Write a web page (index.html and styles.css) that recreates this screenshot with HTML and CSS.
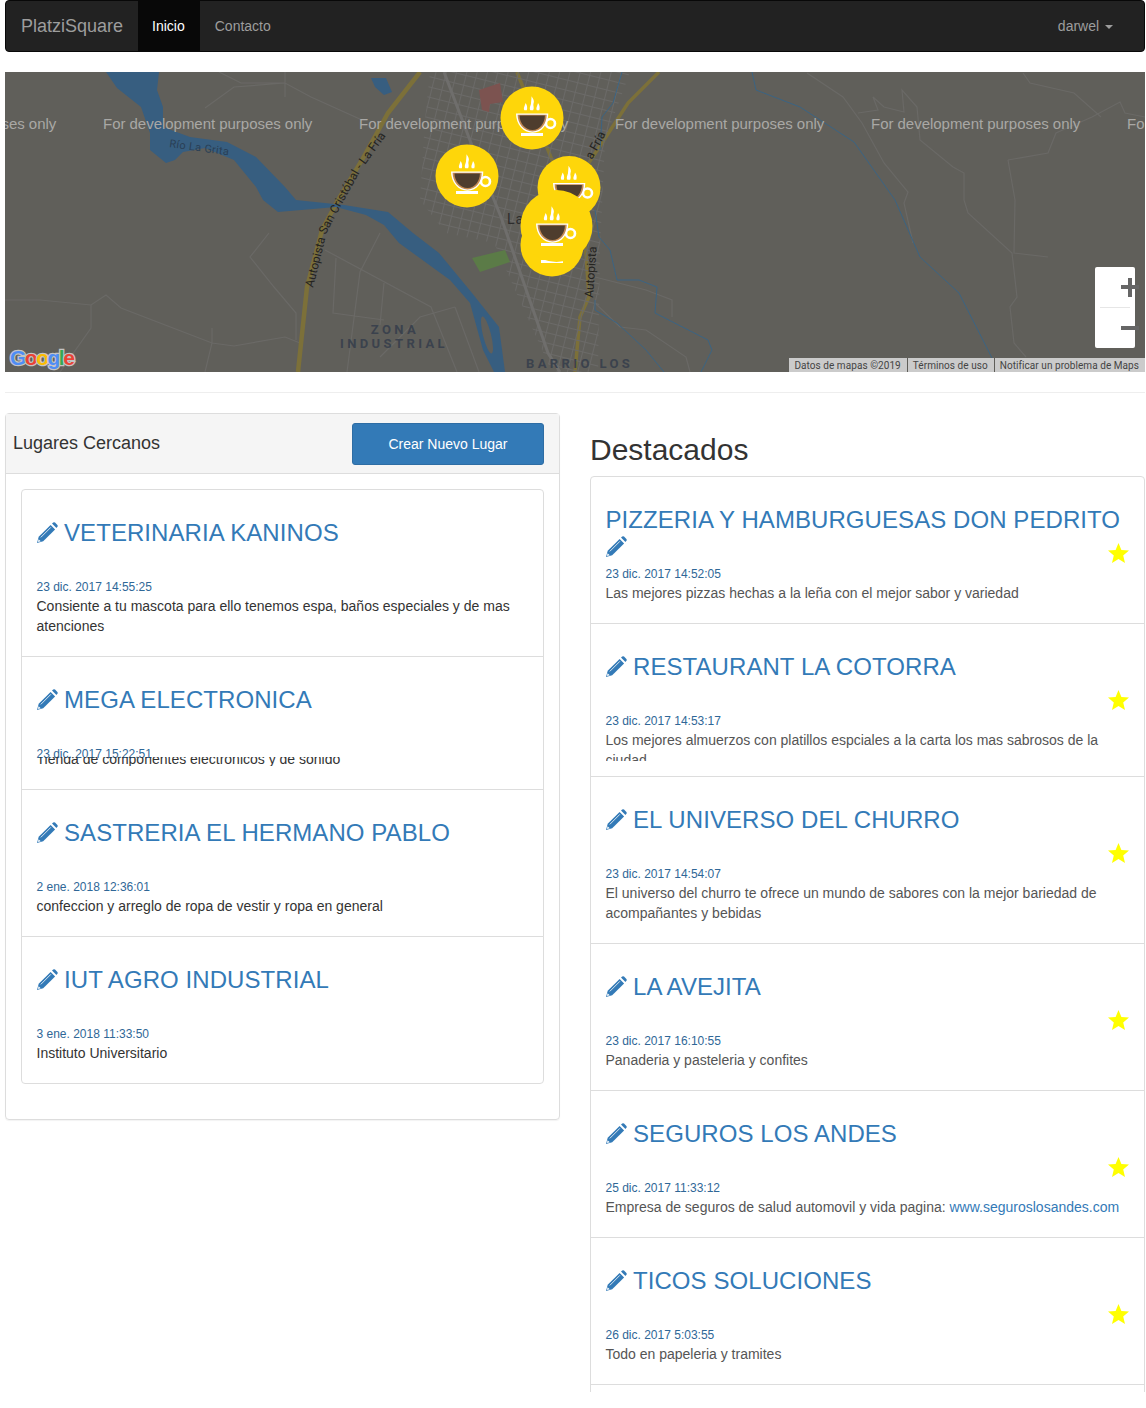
FILE: index.html
```html
<!DOCTYPE html>
<html lang="es">
<head>
<meta charset="utf-8">
<title>PlatziSquare</title>
<link rel="stylesheet" href="styles.css">
</head>
<body>
<svg class="defs" width="0" height="0" aria-hidden="true">
  <symbol id="pencil" viewBox="0 0 21 21">
    <path d="M15 1.600 16.200.6Q17.100-.1 18 .6L20.400 3Q21.100 3.900 20.400 4.800L19.400 5.900Z"/>
    <path d="M13.600 2.900 18.100 7.400 6.200 19.300 0 21 1.700 14.800Z"/>
    <path d="M3.800 15.400 13.900 5.300" stroke="#fff" stroke-width=".8"/>
    <path d="M1.500 17.200 1 20 3.800 19.300Z" fill="#fff"/>
  </symbol>
  <symbol id="star" viewBox="0 0 21 20">
    <path d="M10.500 0 13.400 6.900 21 7.500 15.200 12.500 17 20 10.500 16 4 20 5.800 12.500 0 7.500 7.600 6.900Z"/>
  </symbol>
  <symbol id="cup" viewBox="-32 -32 64 64" overflow="visible">
    <circle cx="18.500" cy="5.500" r="4.500" fill="none" stroke="#fff" stroke-width="2.600"/>
    <path d="M-16-4.500H16.300C16.300 6 10 14.700 .5 14.700-9 14.700-16 6-16-4.500Z" fill="#fff"/>
    <path d="M-14.400-3.300H14.700C14.700 5.500 9 13.400 .5 13.400-8 13.400-14.400 5.500-14.400-3.300Z" fill="#c48a52"/>
    <path d="M-12.500-2.500H12.900C12.900 4.500 8 12 .5 12-7 12-12.500 4.500-12.500-2.500Z" fill="#4e3d2e"/>
    <rect x="-11" y="15" width="22" height="3" fill="#fff"/>
    <path d="M-.5-21.700C1.500-19 2.500-17 1.500-14.500 .8-12.500 2.500-10.500 1.200-7.700H-1.600C-3-10-1.200-12.500-1-14.500-.8-17-.5-19-.5-21.700Z" fill="#fff"/>
    <path d="M-6.500-15C-5-13-4.300-10.500-5.200-7.700H-7.600C-9-10-7-12-6.500-15Z" fill="#fff"/>
    <path d="M6-15C7.500-13 8.200-10.500 7.300-7.700H4.900C3.500-10 5.500-12 6-15Z" fill="#fff"/>
  </symbol>
  <pattern id="streets" width="10" height="10" patternUnits="userSpaceOnUse" patternTransform="rotate(14)">
    <path d="M0 .5H10M.5 0V10" stroke="#6b6a68" stroke-width="1" fill="none"/>
  </pattern>
</svg>

<div class="page">
  <nav class="navbar">
    <a class="brand" href="#">PlatziSquare</a>
    <a class="nav-link active" href="#">Inicio</a>
    <a class="nav-link" href="#">Contacto</a>
    <a class="nav-link user" href="#">darwel <span class="caret"></span></a>
  </nav>

  <div class="map">
    <svg class="map-art" width="1140" height="300" viewBox="5 72 1140 300">
      <rect x="5" y="72" width="1140" height="300" fill="#605f5a"/>
      <path class="minor" d="M5 300 40 300 91 305 106 295 121 308 212 343 234 346 285 337 300 343M91 305V328L60 372M212 328V343L205 372M269 233 250 257 274 287 296 313V340M205 108 234 87 285 83 311 97 362 120M219 72 241 83 285 83M285 72V97"/>
      <path class="minor" d="M325 250 431 307 457 372M455 307 420 317 380 357M336 258 333 313 384 320M384 283 380 325M380 233 360 272 347 372M455 307 479 372"/>
      <path class="minor" d="M807 73 843 97 862 123 884 163 908 192 904 203 913 243M858 113 878 110 873 97 884 107 904 112 902 90 917 107 920 140 953 167 964 173V200L968 213 1012 253 1017 297 1010 307 1014 343 1026 357M1008 160 1048 153 1056 133 1092 117 1120 102 1125 113 1145 117M1008 160 1015 200 1014 253 1048 257M1023 73 1030 83 1074 93 1101 117M595 277 646 290 672 300V317M595 303 620 327 646 330 686 357 690 372"/>
      <path d="M420 72 388 113 362 160 338 200 322 230 307 287 298 372" fill="none" stroke="#7c7039" stroke-width="4.500"/>
      <path d="M517 72 552 160 585 240 589 297 580 317 575 372" fill="none" stroke="#7c7039" stroke-width="3.500"/>
      <path d="M659 72 628 103 602 143 584 170" fill="none" stroke="#7c7039" stroke-width="3.500"/>
      <polygon points="430,72 630,72 605,140 600,250 598,372 552,372 512,283 494,243 446,233 420,200 425,120" fill="url(#streets)"/>
      <path d="M444 72 471 143 501 217 548 353 560 372" fill="none" stroke="#6f6e6c" stroke-width="3"/>
      <polygon points="479,90 500,83 503,102 490,104 489,112 482,110" fill="#7c5350"/>
      <polygon points="472,258 505,250 510,262 480,272" fill="#5b7b47"/>
      <path class="water" d="M106 72 117 88 141 107 150 133 150 150 166 163 175 160 183 152 205 148 234 160 256 187 263 200 278 212 336 207 366 215 384 225 399 243 450 280 470 303 483 350 494 372H505L499 327 472 293 439 253 413 233 388 212 344 205 296 200 285 187 256 157 227 142 190 137 163 127 163 107 157 90 159 72Z"/>
      <path class="water" d="M371 78 386 78 392 92 384 95 375 87Z"/>
      <ellipse cx="487" cy="335" rx="4" ry="19" transform="rotate(-14 487 335)" fill="#605f5a"/>
      <path class="river-thin" d="M752 72 756 90 800 107 854 142 895 200 920 257 959 293 992 358M622 72 613 103 602 117 600 150M595 210 599 237 610 250 617 280 639 280 657 287 655 313 708 340 712 350 701 372M595 300V310L617 323 646 350 664 372"/>
      <path id="hw1" class="none" d="M313 288 327 232 342 204 360 172 390 130"/>
      <text class="road"><textPath href="#hw1">Autopista San Cristóbal - La Fría</textPath></text>
      <text class="road" transform="translate(593 298) rotate(-86)">Autopista</text>
      <text class="road" transform="translate(592 160) rotate(-62)">a Fría</text>
      <text class="river-name" transform="translate(169 147) rotate(8)">Río La Grita</text>
      <text class="place" x="507" y="224">La</text>
      <text class="area" x="395" y="334" text-anchor="middle">ZONA</text>
      <text class="area" x="394" y="348" text-anchor="middle">INDUSTRIAL</text>
      <text class="area" x="526" y="368">BARRIO LOS</text>
      <text class="dev" x="-153" y="129">For development purposes only</text>
      <text class="dev" x="103" y="129">For development purposes only</text>
      <text class="dev" x="359" y="129">For development purposes only</text>
      <text class="dev" x="615" y="129">For development purposes only</text>
      <text class="dev" x="871" y="129">For development purposes only</text>
      <text class="dev" x="1127" y="129">For development purposes only</text>
      <circle class="pin" cx="532" cy="118" r="31.500"/><use href="#cup" x="500" y="86" width="64" height="64"/>
      <circle class="pin" cx="467" cy="176" r="31.500"/><use href="#cup" x="435" y="144" width="64" height="64"/>
      <circle class="pin" cx="569" cy="187.500" r="31.500"/><use href="#cup" x="537" y="155.500" width="64" height="64"/>
      <circle class="pin" cx="552" cy="245" r="31.500"/><use href="#cup" x="520" y="213" width="64" height="64"/>
      <circle class="pin" cx="556.500" cy="226" r="36"/><use href="#cup" x="520" y="196" width="64" height="64"/>
      <text class="logo" x="10" y="365"><tspan fill="#4f8df5">G</tspan><tspan fill="#ea4335">o</tspan><tspan fill="#fbbc05">o</tspan><tspan fill="#4f8df5">g</tspan><tspan fill="#34a853">l</tspan><tspan fill="#ea4335">e</tspan></text>
    </svg>
    <div class="zoom-box">
      <span class="plus-h"></span><span class="plus-v"></span>
      <span class="zoom-line"></span>
      <span class="minus"></span>
    </div>
    <div class="attrib">
      <span>Datos de mapas ©2019</span>
      <span>Términos de uso</span>
      <span>Notificar un problema de Maps</span>
    </div>
  </div>

  <hr class="rule">

  <div class="columns">
    <section class="panel">
      <header class="panel-head">
        <h3 class="panel-title">Lugares Cercanos</h3>
        <a class="btn" href="#">Crear Nuevo Lugar</a>
      </header>
      <div class="panel-body">
        <ul class="list">
          <li class="item">
            <h3 class="title"><svg class="pen"><use href="#pencil"/></svg>VETERINARIA KANINOS</h3>
            <div class="date">23 dic. 2017 14:55:25</div>
            <p class="desc dark">Consiente a tu mascota para ello tenemos espa, baños especiales y de mas atenciones</p>
          </li>
          <li class="item clip-left">
            <h3 class="title"><svg class="pen"><use href="#pencil"/></svg>MEGA ELECTRONICA</h3>
            <div class="date">23 dic. 2017 15:22:51</div>
            <div class="desc-clip"><p class="desc dark">Tienda de componentes electronicos y de sonido</p></div>
          </li>
          <li class="item">
            <h3 class="title"><svg class="pen"><use href="#pencil"/></svg>SASTRERIA EL HERMANO PABLO</h3>
            <div class="date">2 ene. 2018 12:36:01</div>
            <p class="desc dark">confeccion y arreglo de ropa de vestir y ropa en general</p>
          </li>
          <li class="item">
            <h3 class="title"><svg class="pen"><use href="#pencil"/></svg>IUT AGRO INDUSTRIAL</h3>
            <div class="date">3 ene. 2018 11:33:50</div>
            <p class="desc dark">Instituto Universitario</p>
          </li>
        </ul>
      </div>
    </section>

    <section class="featured">
      <h2 class="featured-title">Destacados</h2>
      <ul class="list">
        <li class="item">
          <h3 class="title">PIZZERIA Y HAMBURGUESAS DON PEDRITO <svg class="pen"><use href="#pencil"/></svg></h3>
          <svg class="star"><use href="#star"/></svg>
          <div class="date">23 dic. 2017 14:52:05</div>
          <p class="desc">Las mejores pizzas hechas a la leña con el mejor sabor y variedad</p>
        </li>
        <li class="item clip-right">
          <h3 class="title"><svg class="pen"><use href="#pencil"/></svg>RESTAURANT LA COTORRA</h3>
          <svg class="star"><use href="#star"/></svg>
          <div class="date">23 dic. 2017 14:53:17</div>
          <p class="desc">Los mejores almuerzos con platillos espciales a la carta los mas sabrosos de la ciudad</p>
        </li>
        <li class="item">
          <h3 class="title"><svg class="pen"><use href="#pencil"/></svg>EL UNIVERSO DEL CHURRO</h3>
          <svg class="star"><use href="#star"/></svg>
          <div class="date">23 dic. 2017 14:54:07</div>
          <p class="desc">El universo del churro te ofrece un mundo de sabores con la mejor bariedad de acompañantes y bebidas</p>
        </li>
        <li class="item">
          <h3 class="title"><svg class="pen"><use href="#pencil"/></svg>LA AVEJITA</h3>
          <svg class="star"><use href="#star"/></svg>
          <div class="date">23 dic. 2017 16:10:55</div>
          <p class="desc">Panaderia y pasteleria y confites</p>
        </li>
        <li class="item">
          <h3 class="title"><svg class="pen"><use href="#pencil"/></svg>SEGUROS LOS ANDES</h3>
          <svg class="star"><use href="#star"/></svg>
          <div class="date">25 dic. 2017 11:33:12</div>
          <p class="desc">Empresa de seguros de salud automovil y vida pagina: <a class="link" href="#">www.seguroslosandes.com</a></p>
        </li>
        <li class="item">
          <h3 class="title"><svg class="pen"><use href="#pencil"/></svg>TICOS SOLUCIONES</h3>
          <svg class="star"><use href="#star"/></svg>
          <div class="date">26 dic. 2017 5:03:55</div>
          <p class="desc">Todo en papeleria y tramites</p>
        </li>
        <li class="item item-tail"></li>
      </ul>
    </section>
  </div>
</div>
</body>
</html>
```

FILE: styles.css
```css
* { box-sizing: border-box; }
html, body { margin: 0; padding: 0; background: #fff; }
body {
  font-family: "Liberation Sans", Arial, sans-serif;
  font-size: 14px;
  line-height: 20px;
  color: #333;
}
a { text-decoration: none; }
.defs { position: absolute; }
.page { padding: 0 1px 0 5px; }

/* navbar */
.navbar {
  display: flex;
  height: 52px;
  margin-bottom: 20px;
  background: #222;
  border: 1px solid #080808;
  border-radius: 4px;
}
.brand { padding: 15px; font-size: 18px; color: #9d9d9d; }
.nav-link { padding: 15px; color: #9d9d9d; }
.nav-link.active { padding-left: 14px; color: #fff; background: #080808; }
.nav-link.user { margin-left: auto; margin-right: 16px; }
.caret {
  display: inline-block;
  margin-left: 2px;
  vertical-align: middle;
  border-top: 4px solid;
  border-left: 4px solid transparent;
  border-right: 4px solid transparent;
}

/* map */
.map { position: relative; height: 300px; overflow: hidden; }
.map-art { display: block; }
.minor { fill: none; stroke: #6a6966; stroke-width: 1.200; }
.water { fill: #375e80; }
.river-thin { fill: none; stroke: #3b6483; stroke-width: 1; }
.none { fill: none; }
.road { font: 12px Roboto, sans-serif; fill: #24231f; }
.river-name { font: 11px Roboto, sans-serif; fill: #2a3f55; letter-spacing: .3px; }
.place { font: 14px Roboto, sans-serif; fill: #2d2d2d; letter-spacing: 1px; }
.area { font: bold 13px Roboto, sans-serif; fill: #3b424d; letter-spacing: 3.400px; }
.dev { font: 15px "Liberation Sans", sans-serif; fill: #a9a8a5; letter-spacing: -.03px; }
.pin { fill: #fed60a; }
.logo {
  font: bold 21px "Liberation Sans", sans-serif;
  letter-spacing: -1.500px;
  stroke: #c4c4c4;
  stroke-width: 2.500px;
  paint-order: stroke;
}
.zoom-box {
  position: absolute;
  left: 1090px;
  top: 195px;
  width: 40px;
  height: 81px;
  background: #fff;
  border-radius: 2px;
}
.plus-h, .plus-v, .minus, .zoom-line { position: absolute; }
.plus-h { left: 26px; top: 18px; width: 18px; height: 4px; background: #666; }
.plus-v { left: 33px; top: 11px; width: 4px; height: 19px; background: #666; }
.minus { left: 26px; top: 59px; width: 18px; height: 4px; background: #666; }
.zoom-line { left: 5px; top: 40px; width: 30px; height: 1px; background: #e6e6e6; }
.attrib {
  position: absolute;
  right: 0;
  bottom: 0;
  display: flex;
  height: 14px;
  font: 10px/16px Roboto, sans-serif;
  color: #444;
  letter-spacing: .06px;
}
.attrib span { padding: 0 6px 0 5px; background: #cbcbcb; border-left: 1px solid #5f5e59; }
.attrib span:first-child { border-left: 0; }

.rule { height: 1px; margin: 20px 0; border: 0; background: #eee; }

/* columns */
.columns { display: flex; align-items: flex-start; gap: 30px; }

.panel {
  width: 555px;
  border: 1px solid #ddd;
  border-radius: 4px;
  box-shadow: 0 1px 1px rgba(0, 0, 0, .05);
}
.panel-head {
  display: flex;
  align-items: center;
  justify-content: space-between;
  height: 60px;
  padding: 0 15px 0 7px;
  background: #f5f5f5;
  border-bottom: 1px solid #ddd;
}
.panel-title { margin: 0; padding-bottom: 2px; font-size: 18px; font-weight: 400; color: #333; }
.btn {
  display: block;
  width: 192px;
  height: 42px;
  line-height: 40px;
  text-align: center;
  color: #fff;
  background: #337ab7;
  border: 1px solid #2e6da4;
  border-radius: 3px;
}
.panel-body { padding: 15px; }

.featured { width: 555px; }
.featured-title { margin: 20px 0 10px; font-size: 30px; line-height: 33px; font-weight: 500; color: #333; }

/* lists */
.list { margin: 0 0 20px; padding: 0; list-style: none; }
.featured .list { margin: 0; }
.item {
  position: relative;
  margin-bottom: -1px;
  padding: 10px 15px 10px 14.500px;
  background: #fff;
  border: 1px solid #ddd;
}
.item:first-child { border-radius: 4px 4px 0 0; }
.item:last-child { margin-bottom: 0; border-radius: 0 0 4px 4px; }
.title {
  min-height: 60px;
  margin: 19px 0 0;
  font-size: 24px;
  line-height: 27px;
  font-weight: 500;
  letter-spacing: .07px;
  color: #337ab7;
}
.pen { width: 21px; height: 21px; margin-right: 6.500px; margin-bottom: -2px; fill: #337ab7; }
.star { position: absolute; top: 66px; right: 15px; width: 21px; height: 20px; fill: #ff0; }
.date { font-size: 12px; line-height: 17px; color: #2f6797; }
.desc { margin: 0 0 10px; color: #555; }
.desc.dark { color: #333; }
.link { color: #337ab7; }

.clip-left { height: 134px; }
.desc-clip { height: 9px; margin-top: -6px; overflow: hidden; }
.desc-clip .desc { margin-top: -8px; }

.clip-right { height: 154px; }
.clip-right .desc { height: 31px; overflow: hidden; }

.item-tail { height: 8px; padding: 0; border-bottom: 0; border-radius: 0; }
.item-tail:last-child { border-radius: 0; }
```
